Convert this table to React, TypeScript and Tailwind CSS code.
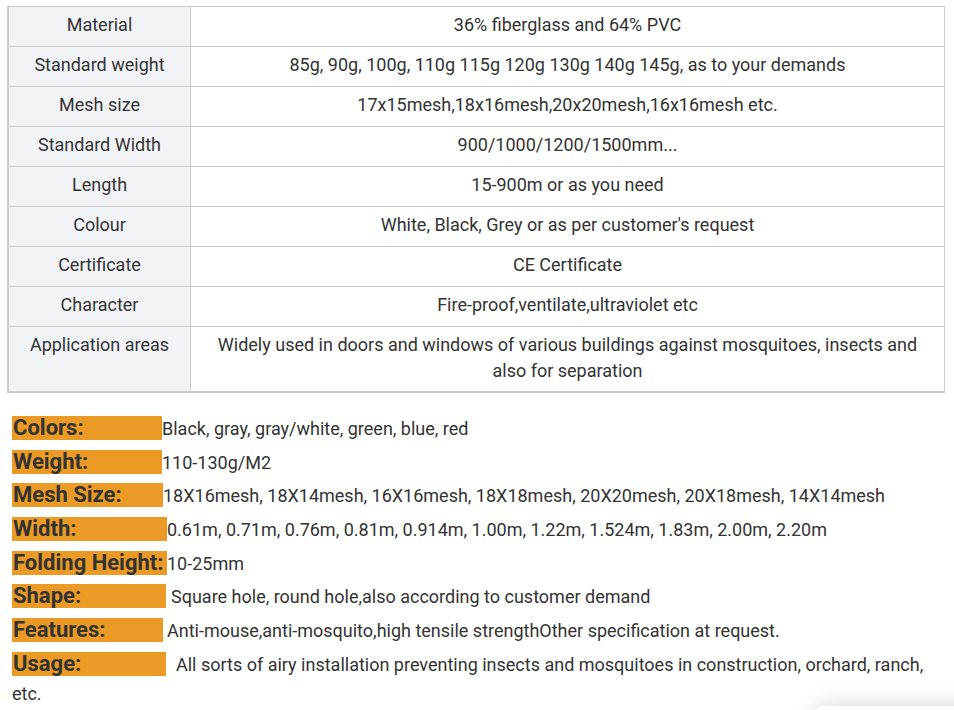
import React from 'react';

const rows: [string, string][] = [
  ['Material', '36% fiberglass and 64% PVC'],
  ['Standard weight', '85g, 90g, 100g, 110g 115g 120g 130g 140g 145g, as to your demands'],
  ['Mesh size', '17x15mesh,18x16mesh,20x20mesh,16x16mesh etc.'],
  ['Standard Width', '900/1000/1200/1500mm...'],
  ['Length', '15-900m or as you need'],
  ['Colour', "White, Black, Grey or as per customer's request"],
  ['Certificate', 'CE Certificate'],
  ['Character', 'Fire-proof,ventilate,ultraviolet etc'],
];

const specs = [
  { label: 'Colors:', box: 'w-[150px]', gap: 'ml-0', value: 'Black, gray, gray/white, green, blue, red' },
  { label: 'Weight:', box: 'w-[150px]', gap: 'ml-0', value: '110-130g/M2' },
  { label: 'Mesh Size:', box: 'w-[151px]', gap: 'ml-0', value: '18X16mesh, 18X14mesh, 16X16mesh, 18X18mesh, 20X20mesh, 20X18mesh, 14X14mesh' },
  { label: 'Width:', box: 'w-[155px]', gap: 'ml-0', value: '0.61m, 0.71m, 0.76m, 0.81m, 0.914m, 1.00m, 1.22m, 1.524m, 1.83m, 2.00m, 2.20m' },
  { label: 'Folding Height:', box: 'w-[155px]', gap: 'ml-0', value: '10-25mm' },
  { label: 'Shape:', box: 'w-[154px]', gap: 'ml-[5px]', value: 'Square hole, round hole,also according to customer demand' },
  { label: 'Features:', box: 'w-[151px]', gap: 'ml-[4px]', value: 'Anti-mouse,anti-mosquito,high tensile strengthOther specification at request.' },
  { label: 'Usage:', box: 'w-[154px]', gap: 'ml-[10px]', value: 'All sorts of airy installation preventing insects and mosquitoes in construction, orchard, ranch, etc.' },
];

export default function App() {
  return (
    <div className="relative w-[954px] h-[710px] overflow-hidden bg-white text-[#333] font-['Roboto',sans-serif]">
      {/* Spec table */}
      <div className="ml-[7px] mt-[6px] w-[938px] border-t border-l-2 border-b border-[#cccccc] text-[18px] leading-[26px]">
        {rows.map(([k, v]) => (
          <div key={k} className="flex border-b border-[#cccccc]">
            <div className="w-[182px] h-[39px] pt-[5px] text-center bg-[#f2f3f7] border-r border-[#cccccc] whitespace-nowrap">{k}</div>
            <div className="flex-1 h-[39px] pt-[5px] text-center border-r border-[#cccccc] whitespace-nowrap">{v}</div>
          </div>
        ))}
        <div className="flex border-b border-[#cccccc]">
          <div className="w-[182px] pt-[5px] pb-[7px] text-center bg-[#f2f3f7] border-r border-[#cccccc]">Application areas</div>
          <div className="flex-1 pt-[5px] pb-[7px] px-[20px] text-center border-r border-[#cccccc]">
            Widely used in doors and windows of various buildings against mosquitoes, insects and also for separation
          </div>
        </div>
      </div>

      {/* Labelled specs */}
      <div className="mt-[21px] px-[12px] text-[18px] leading-[29px]">
        {specs.map((s) => (
          <p key={s.label} className="mb-[4.7px]">
            <span className={`inline-block ${s.box} h-[24px] bg-[#ea9a25] text-[22px] leading-[24px] font-bold text-[#333] pl-[1px] whitespace-nowrap`}>
              {s.label}
            </span>
            <span className={s.gap}>{s.value}</span>
          </p>
        ))}
      </div>

      {/* floating element shadow peeking in at the corner */}
      <div className="absolute left-[815px] top-[706px] w-[200px] h-[60px] bg-white rounded-[8px] shadow-[0_0_22px_rgba(0,0,0,0.18)]" />
    </div>
  );
}
